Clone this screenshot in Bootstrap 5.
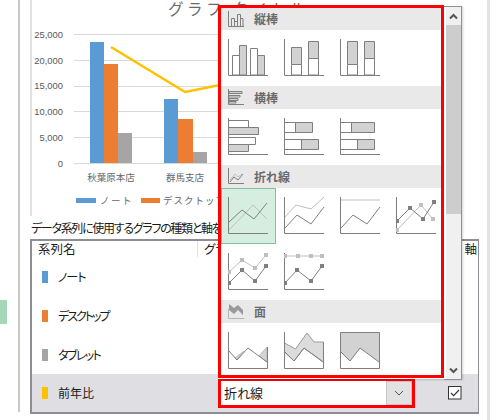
<!DOCTYPE html>
<html lang="ja">
<head>
<meta charset="utf-8">
<title>グラフの種類</title>
<link href="https://cdn.jsdelivr.net/npm/bootstrap@5.3.0/dist/css/bootstrap.min.css" rel="stylesheet">
<style>
html,body{margin:0;background:#fff;overflow:hidden}
body{font-family:"Noto Sans CJK JP","Liberation Sans",sans-serif;font-size:12px;color:#1a1a1a;font-feature-settings:"palt"}
.stage{width:500px;height:420px;overflow:hidden;position:relative}
.rail{width:20px;height:412px;border-right:2px solid #c9c9c9;flex:none}
.rail-tab{width:7px;height:24px;margin-top:300px;background:#a3d7b8}
.pane{width:470px;padding-left:10px;height:420px;border-right:3px solid #e4e4e4;flex:none}
.chart-wrap{height:216px;border-left:2px solid #e2e2e2}
.chart-wrap svg{display:block}
.ax{font:9.4px "Liberation Sans",sans-serif;fill:#595959}
.cat{font:9.5px "Noto Sans CJK JP",sans-serif;fill:#666}
.ttl{font:15.5px "Noto Sans CJK JP",sans-serif;fill:#6a6a6a;letter-spacing:3.6px}
.cap{height:23px;line-height:23px;white-space:nowrap;margin-left:1px;font-size:12px;letter-spacing:-1.3px}
.sheet{width:449px;height:175px;border:2px solid #8d8d93;border-right-width:1.5px;padding-bottom:1px}
.sheet-row{display:grid;grid-template-columns:165px 1fr 46px;height:39px;align-items:center}
.sheet-head{height:16px;font-size:12.5px;line-height:16px}
.sheet-head>div:nth-child(2){border-left:1px solid #e2e2e2;padding-left:6px;height:16px}
.sheet-head>div:nth-child(3){text-align:right;padding-right:1px}
.name-head{padding-left:6px}
.sw{width:6px;height:12px;margin-left:10px;margin-right:10px;flex:none}
.kana-a{letter-spacing:-1px}
.kana-b{letter-spacing:-2px}
.kana-c{letter-spacing:-1.6px}
.sel-row{background:#dfdfe3;height:38px}
.combo{margin-left:21px;width:197px;height:30px;border:3px solid #f00;background:#fff;line-height:24px;padding-left:3px;font-size:13px}
.combo-btn{width:26px;height:24px;background:#e2e2e2;border:1px solid #c6c6c6}
.pop{position:absolute;left:218px;top:5px;width:244px;height:374px;background:#fff;box-shadow:1px 1px 2px rgba(0,0,0,.18)}
.pick{width:226px;height:373px;border:3px solid #f00;overflow:hidden;flex:none;background:#fff}
.sbar{width:18px;height:374px;margin-top:1px;background:#f0f0f0;border:1px solid #8e9199;border-left:0;flex:none;padding-left:2px;background-clip:content-box}
.sb-btn{height:18px}
.sb-thumb{height:189px;background:#cdcdcd}
.sb-track{height:147px}
.sec{height:23px;background:#e9e9e9;padding-left:7px;padding-bottom:1px;gap:10px;color:#6b6b6b;font-weight:700;font-size:12px;line-height:21px}
.sec:first-child{height:22px}
.cells{display:grid;grid-template-columns:repeat(3,56px) 52px;grid-auto-rows:56px}
.cell{padding:9px 0 0 7px}
.cell svg{display:block}
.cell-on{background:#d5eee0;border:1px solid #86bf9f;padding:8px 0 0 6px;margin-right:1px}
.ic{fill:none;stroke:#7f7f7f;stroke-width:1}
.dk{fill:none;stroke:#7f7f7f;stroke-width:1}
.lt{fill:none;stroke:#bfbfbf;stroke-width:1}
.w{fill:#fff;stroke:#7f7f7f}
.g{fill:#d2d2d2;stroke:#7f7f7f}
.mk-d{fill:#7f7f7f}
.mk-l{fill:#bfbfbf}
</style>
</head>
<body>
<div class="stage d-flex">
  <div class="rail"><div class="rail-tab"></div></div>
  <div class="pane d-flex flex-column">
    <div class="chart-wrap">
      <svg width="440" height="216" viewBox="32 0 440 216">
        <text class="ttl" x="168" y="15">グラフ タイトル</text>
        <g stroke="#d9d9d9" stroke-width="1">
          <line x1="74" y1="34.5" x2="440" y2="34.5"/><line x1="74" y1="60.5" x2="440" y2="60.5"/>
          <line x1="74" y1="86.5" x2="440" y2="86.5"/><line x1="74" y1="111.5" x2="440" y2="111.5"/>
          <line x1="74" y1="137.5" x2="440" y2="137.5"/><line x1="74" y1="163.5" x2="440" y2="163.5"/>
        </g>
        <g class="ax" text-anchor="end">
          <text x="63" y="38">25,000</text><text x="63" y="64">20,000</text><text x="63" y="89">15,000</text>
          <text x="63" y="115">10,000</text><text x="63" y="141">5,000</text><text x="63" y="167">0</text>
        </g>
        <rect x="90" y="42" width="14" height="121" fill="#5b9bd5"/>
        <rect x="104" y="64" width="14" height="99" fill="#ed7d31"/>
        <rect x="118" y="133" width="14" height="30" fill="#a5a5a5"/>
        <rect x="164" y="99" width="14" height="64" fill="#5b9bd5"/>
        <rect x="178" y="119" width="15" height="44" fill="#ed7d31"/>
        <rect x="193" y="152" width="14" height="11" fill="#a5a5a5"/>
        <polyline points="111,47 185,92 230,83" fill="none" stroke="#ffc000" stroke-width="2.5"/>
        <text class="cat" x="111" y="181" text-anchor="middle">秋葉原本店</text>
        <text class="cat" x="185" y="181" text-anchor="middle">群馬支店</text>
        <rect x="76" y="198" width="20" height="5" fill="#5b9bd5"/>
        <text class="cat" x="100" y="204" letter-spacing="1.5">ノート</text>
        <rect x="141" y="198" width="19" height="5" fill="#ed7d31"/>
        <text class="cat" x="163" y="204" letter-spacing="1">デスクトップ</text>
      </svg>
    </div>
    <div class="cap">データ系列に使用するグラフの種類と軸を選択してください:</div>
    <div class="sheet">
      <div class="sheet-row sheet-head">
        <div class="name-head">系列名</div><div>グラフの種類</div><div>第 2 軸</div>
      </div>
      <div class="sheet-row"><div class="d-flex align-items-center"><span class="sw" style="background:#5b9bd5"></span><span class="kana-a">ノート</span></div></div>
      <div class="sheet-row"><div class="d-flex align-items-center"><span class="sw" style="background:#ed7d31"></span><span class="kana-b">デスクトップ</span></div></div>
      <div class="sheet-row"><div class="d-flex align-items-center"><span class="sw" style="background:#a5a5a5"></span><span class="kana-c">タブレット</span></div></div>
      <div class="sheet-row sel-row">
        <div class="d-flex align-items-center"><span class="sw" style="background:#ffc000"></span>前年比</div>
        <div class="combo d-flex justify-content-between">折れ線
          <span class="combo-btn d-flex align-items-center justify-content-center">
            <svg width="10" height="6" viewBox="0 0 10 6"><path d="M1 1l4 4 4-4" fill="none" stroke="#555" stroke-width="1"/></svg>
          </span>
        </div>
        <div class="d-flex justify-content-center">
          <svg width="14" height="14" viewBox="0 0 14 14"><rect x=".5" y=".5" width="12.5" height="12.5" fill="#fff" stroke="#333"/><path d="M3 7l2.600 2.600L11 4" fill="none" stroke="#333" stroke-width="1.2"/></svg>
        </div>
      </div>
    </div>
  </div>

  <div class="pop d-flex">
    <div class="pick">
      <div class="sec d-flex align-items-center">
        <svg width="16" height="16" viewBox="0 0 16 16"><path class="ic" d="M.5 0v15.500H16M3.500 15V7.500h3V15M6.500 10.500h3V15M9.500 15V3.500h3V15M12.500 7.500h2.500V15"/></svg>
        <span>縦棒</span>
      </div>
      <div class="cells">
        <div class="cell"><svg width="41" height="37" viewBox="0 0 41 37"><path class="w" d="M4.500 36V16.500h7V36zM22.500 36V9.500h7V36z"/><path class="g" d="M11.500 36V6.500h7V36zM29.500 36V16.500h7V36z"/><path class="ic" d="M.5 0v36.500H40"/></svg></div>
        <div class="cell"><svg width="41" height="37" viewBox="0 0 41 37"><path class="g" d="M7.500 8.500h10v17h-10zM24.500 2.500h10v17h-10z"/><path class="w" d="M7.500 25.500h10V36h-10zM24.500 19.500h10V36h-10z"/><path class="ic" d="M.5 0v36.500H40"/></svg></div>
        <div class="cell"><svg width="41" height="37" viewBox="0 0 41 37"><path class="g" d="M7.500 2.500h10v23h-10zM24.500 2.500h10v17h-10z"/><path class="w" d="M7.500 25.500h10V36h-10zM24.500 19.500h10V36h-10z"/><path class="ic" d="M.5 0v36.500H40"/></svg></div>
      </div>
      <div class="sec d-flex align-items-center">
        <svg width="16" height="16" viewBox="0 0 16 16"><path class="g" d="M1 2.500h13v2H1zM1 9.500h9v2H1z"/><path class="w" d="M1 6.500h11v1.500H1zM1 12.500h7v1.500H1z"/><path d="M.5 0v15.500H16" class="ic"/></svg>
        <span>横棒</span>
      </div>
      <div class="cells">
        <div class="cell"><svg width="41" height="37" viewBox="0 0 41 37"><path class="w" d="M.5 2.500h20v7H.5zM.5 19.500h27v7H.5z"/><path class="g" d="M.5 9.500h30v7H.5zM.5 26.500h20v7H.5z"/><path class="ic" d="M.5 0v36.500H40"/></svg></div>
        <div class="cell"><svg width="41" height="37" viewBox="0 0 41 37"><path class="w" d="M.5 4.500h11v10H.5zM.5 21.500h17v10H.5z"/><path class="g" d="M11.500 4.500h17v10h-17zM17.500 21.500h17v10h-17z"/><path class="ic" d="M.5 0v36.500H40"/></svg></div>
        <div class="cell"><svg width="41" height="37" viewBox="0 0 41 37"><path class="w" d="M.5 4.500h11v10H.5zM.5 21.500h17v10H.5z"/><path class="g" d="M11.500 4.500h23v10h-23zM17.500 21.500h17v10h-17z"/><path class="ic" d="M.5 0v36.500H40"/></svg></div>
      </div>
      <div class="sec d-flex align-items-center">
        <svg width="16" height="16" viewBox="0 0 16 16"><path d="M2 12l5-6 3 3 4-3" class="lt"/><path d="M2 14l4-5 4 3 5-6" class="dk"/><path d="M.5 0v15.500H16" class="ic"/></svg>
        <span>折れ線</span>
      </div>
      <div class="cells">
        <div class="cell cell-on"><svg width="41" height="37" viewBox="0 0 41 37"><polyline class="lt" points="1,33 25,8 39,22"/><polyline class="dk" points="1,25 14,13 26,22 39,6"/><path class="ic" d="M.5 0v36.500H40"/></svg></div>
        <div class="cell"><svg width="41" height="37" viewBox="0 0 41 37"><polyline class="lt" points="1,20 12,8 27,12 40,0"/><polyline class="dk" points="1,31 13,18 27,27 40,10"/><path class="ic" d="M.5 0v36.500H40"/></svg></div>
        <div class="cell"><svg width="41" height="37" viewBox="0 0 41 37"><polyline class="lt" points="1,3 40,3"/><polyline class="dk" points="1,31 13,18 27,27 40,10"/><path class="ic" d="M.5 0v36.500H40"/></svg></div>
        <div class="cell"><svg width="41" height="37" viewBox="0 0 41 37"><polyline class="lt" points="1,33 25,8 37,22"/><polyline class="dk" points="1,24 14,11 27,22 38,5"/><path class="ic" d="M.5 0v36.500H40"/><path class="mk-l" d="M-1 31h4v4h-4zM23 6h4v4h-4zM35 20h4v4h-4z"/><path class="mk-d" d="M-1 22h4v4h-4zM12 9h4v4h-4zM25 20h4v4h-4zM36 3h4v4h-4z"/></svg></div>
        <div class="cell"><svg width="41" height="37" viewBox="0 0 41 37"><polyline class="lt" points="1,19 14,7 27,15 38,2"/><polyline class="dk" points="1,30 14,17 27,28 38,13"/><path class="ic" d="M.5 0v36.500H40"/><path class="mk-l" d="M-1 17h4v4h-4zM12 5h4v4h-4zM25 13h4v4h-4zM36 0h4v4h-4z"/><path class="mk-d" d="M-1 28h4v4h-4zM12 15h4v4h-4zM25 26h4v4h-4zM36 11h4v4h-4z"/></svg></div>
        <div class="cell"><svg width="41" height="37" viewBox="0 0 41 37"><polyline class="lt" points="1,3 39,3"/><polyline class="dk" points="1,30 13,17 27,28 38,13"/><path class="ic" d="M.5 0v36.500H40"/><path class="mk-l" d="M-1 1h4v4h-4zM12 1h4v4h-4zM25 1h4v4h-4zM36 1h4v4h-4z"/><path class="mk-d" d="M-1 28h4v4h-4zM11 15h4v4h-4zM25 26h4v4h-4zM36 11h4v4h-4z"/></svg></div>
      </div>
      <div class="sec d-flex align-items-center">
        <svg width="16" height="16" viewBox="0 0 16 16"><path d="M1 1l5 4 4-3 5 5v5l-5-5-4 4-5-4z" fill="#9a9a9a"/><path d="M.5 6v9.500H16" fill="none" stroke="#b5b5b5"/></svg>
        <span>面</span>
      </div>
      <div class="cells">
        <div class="cell"><svg width="41" height="37" viewBox="0 0 41 37"><path d="M7 26l9-7-7 9zM31 24l8-9v15z" fill="#d4d4d4" stroke="#9a9a9a" stroke-width=".6"/><polyline class="dk" points="1,19 9,28 20,16 39,30"/><path class="ic" d="M.5 0v36.500h39V15"/></svg></div>
        <div class="cell"><svg width="41" height="37" viewBox="0 0 41 37"><path d="M.5 11l11 6L23 1l7 9h9.500v20L20 16 10 29 .5 20z" fill="#dcdcdc" stroke="#9b9b9b"/><polyline class="dk" points="1,20 10,29 20,16 39,30"/><path class="ic" d="M.5 0v36.500h39V10"/></svg></div>
        <div class="cell"><svg width="41" height="37" viewBox="0 0 41 37"><path d="M.5.500h39V30L20 16 10 29 .5 20z" fill="#d2d2d2"/><polyline class="dk" points="1,20 10,29 20,16 39,30"/><path class="ic" d="M.5.500h39v36H.5z"/></svg></div>
      </div>
    </div>
    <div class="sbar">
      <div class="sb-btn d-flex align-items-center justify-content-center"><svg width="9" height="7" viewBox="0 0 9 7"><path d="M1 5.500l3.500-3.500 3.500 3.500" fill="none" stroke="#555" stroke-width="2"/></svg></div>
      <div class="sb-thumb"></div>
      <div class="sb-track"></div>
      <div class="sb-btn d-flex align-items-center justify-content-center"><svg width="9" height="7" viewBox="0 0 9 7"><path d="M1 1.500l3.500 3.500 3.500-3.500" fill="none" stroke="#555" stroke-width="2"/></svg></div>
    </div>
  </div>
</div>
<script src="https://cdn.jsdelivr.net/npm/bootstrap@5.3.0/dist/js/bootstrap.bundle.min.js"></script>
</body>
</html>
